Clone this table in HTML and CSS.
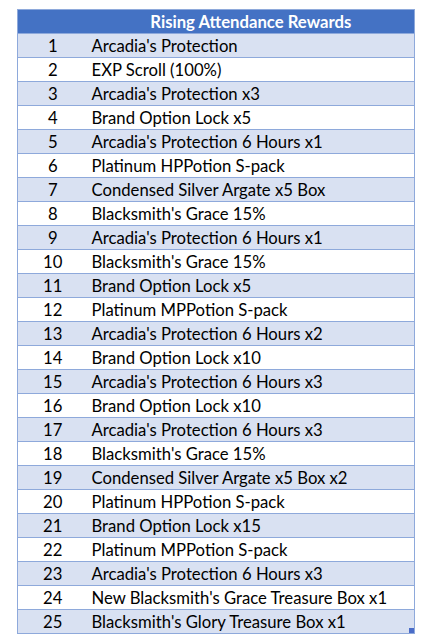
FILE: index.html
```html
<!DOCTYPE html>
<html>
<head>
<meta charset="utf-8">
<link rel="stylesheet" href="styles.css">
</head>
<body>
<div class="sheet">
<table class="rewards">
<thead>
<tr><th class="num"></th><th class="name">Rising Attendance Rewards</th></tr>
</thead>
<tbody>
<tr><td class="num">1</td><td class="name">Arcadia's Protection</td></tr>
<tr><td class="num">2</td><td class="name">EXP Scroll (100%)</td></tr>
<tr><td class="num">3</td><td class="name">Arcadia's Protection x3</td></tr>
<tr><td class="num">4</td><td class="name">Brand Option Lock x5</td></tr>
<tr><td class="num">5</td><td class="name">Arcadia's Protection 6 Hours x1</td></tr>
<tr><td class="num">6</td><td class="name">Platinum HPPotion S-pack</td></tr>
<tr><td class="num">7</td><td class="name">Condensed Silver Argate x5 Box</td></tr>
<tr><td class="num">8</td><td class="name">Blacksmith's Grace 15%</td></tr>
<tr><td class="num">9</td><td class="name">Arcadia's Protection 6 Hours x1</td></tr>
<tr><td class="num">10</td><td class="name">Blacksmith's Grace 15%</td></tr>
<tr><td class="num">11</td><td class="name">Brand Option Lock x5</td></tr>
<tr><td class="num">12</td><td class="name">Platinum MPPotion S-pack</td></tr>
<tr><td class="num">13</td><td class="name">Arcadia's Protection 6 Hours x2</td></tr>
<tr><td class="num">14</td><td class="name">Brand Option Lock x10</td></tr>
<tr><td class="num">15</td><td class="name">Arcadia's Protection 6 Hours x3</td></tr>
<tr><td class="num">16</td><td class="name">Brand Option Lock x10</td></tr>
<tr><td class="num">17</td><td class="name">Arcadia's Protection 6 Hours x3</td></tr>
<tr><td class="num">18</td><td class="name">Blacksmith's Grace 15%</td></tr>
<tr><td class="num">19</td><td class="name">Condensed Silver Argate x5 Box x2</td></tr>
<tr><td class="num">20</td><td class="name">Platinum HPPotion S-pack</td></tr>
<tr><td class="num">21</td><td class="name">Brand Option Lock x15</td></tr>
<tr><td class="num">22</td><td class="name">Platinum MPPotion S-pack</td></tr>
<tr><td class="num">23</td><td class="name">Arcadia's Protection 6 Hours x3</td></tr>
<tr><td class="num">24</td><td class="name">New Blacksmith's Grace Treasure Box x1</td></tr>
<tr class="last"><td class="num">25</td><td class="name">Blacksmith's Glory Treasure Box x1<span class="handle"></span></td></tr>
</tbody>
</table>
</div>
</body>
</html>
```

FILE: styles.css
```css
html, body {
  margin: 0;
  padding: 0;
  background: #ffffff;
}

.sheet {
  padding: 9px 0 0 17px;
}

.rewards {
  border-collapse: collapse;
  width: 398px;
  font-family: Lato, "Open Sans", sans-serif;
  font-size: 16.7px;
  color: #000000;
  border: 1px solid #8ea9db;
  table-layout: fixed;
}

.rewards th,
.rewards td {
  box-sizing: border-box;
  height: 23px;
  padding: 2px 0 0 0;
  line-height: 21px;
  white-space: nowrap;
}

.rewards tbody tr {
  border-top: 1px solid #8ea9db;
}

.rewards tbody tr:nth-child(odd) {
  background: #d9e1f2;
}

.rewards thead tr {
  background: #4472c4;
}

.rewards th {
  color: #ffffff;
  font-weight: bold;
  text-align: center;
}

.rewards .num {
  width: 70px;
  text-align: center;
}

.rewards td.name {
  text-align: left;
  padding-left: 4px;
  position: relative;
}

.handle {
  position: absolute;
  right: 0;
  bottom: 0;
  width: 5px;
  height: 5px;
  background: #4a6cc8;
}
```
